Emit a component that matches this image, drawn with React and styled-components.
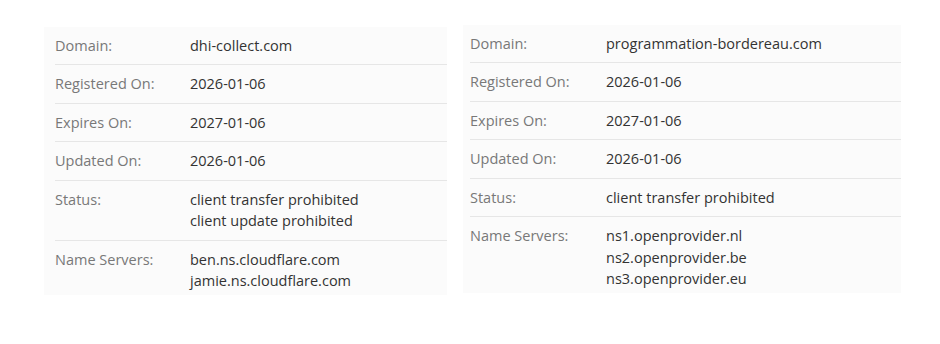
import React from "react";
import styled, { createGlobalStyle } from "styled-components";

const Global = createGlobalStyle`
  html, body { margin: 0; padding: 0; background: #ffffff; }
  body { font-family: "Open Sans", "Liberation Sans", sans-serif; }
`;

const Page = styled.div`
  display: flex;
  align-items: flex-start;
  gap: 16px;
  padding: 24.5px 0 0 44px;
  width: 940px;
  height: 344px;
  box-sizing: border-box;
`;

const Panel = styled.div`
  width: ${(p) => p.$width}px;
  margin-top: ${(p) => p.$offset || 0}px;
  background: #fbfbfb;
  padding-left: ${(p) => p.$inset}px;
  box-sizing: border-box;
  display: flex;
  flex-direction: column;
`;

const Row = styled.div`
  display: grid;
  grid-template-columns: ${(p) => p.$label}px 1fr;
  padding: 8px 0;
  border-bottom: 1px solid #e6e6e6;
  font-size: 14.5px;
  line-height: 21.5px;
  &:last-child {
    border-bottom: none;
    padding-bottom: 3px;
  }
`;

const Label = styled.div`
  color: #787878;
`;

const Value = styled.div`
  color: #333333;
  display: flex;
  flex-direction: column;
`;

const left = [
  ["Domain:", ["dhi-collect.com"]],
  ["Registered On:", ["2026-01-06"]],
  ["Expires On:", ["2027-01-06"]],
  ["Updated On:", ["2026-01-06"]],
  ["Status:", ["client transfer prohibited", "client update prohibited"]],
  ["Name Servers:", ["ben.ns.cloudflare.com", "jamie.ns.cloudflare.com"]],
];

const right = [
  ["Domain:", ["programmation-bordereau.com"]],
  ["Registered On:", ["2026-01-06"]],
  ["Expires On:", ["2027-01-06"]],
  ["Updated On:", ["2026-01-06"]],
  ["Status:", ["client transfer prohibited"]],
  ["Name Servers:", ["ns1.openprovider.nl", "ns2.openprovider.be", "ns3.openprovider.eu"]],
];

function WhoisPanel({ rows, width, inset, label, offset }) {
  return (
    <Panel $width={width} $inset={inset} $offset={offset}>
      {rows.map(([k, vals]) => (
        <Row key={k} $label={label}>
          <Label>{k}</Label>
          <Value>
            {vals.map((v) => (
              <span key={v}>{v}</span>
            ))}
          </Value>
        </Row>
      ))}
    </Panel>
  );
}

export default function App() {
  return (
    <>
      <Global />
      <Page>
        <WhoisPanel rows={left} width={403} inset={11} label={135} offset={2} />
        <WhoisPanel rows={right} width={438} inset={7} label={136} offset={0} />
      </Page>
    </>
  );
}
